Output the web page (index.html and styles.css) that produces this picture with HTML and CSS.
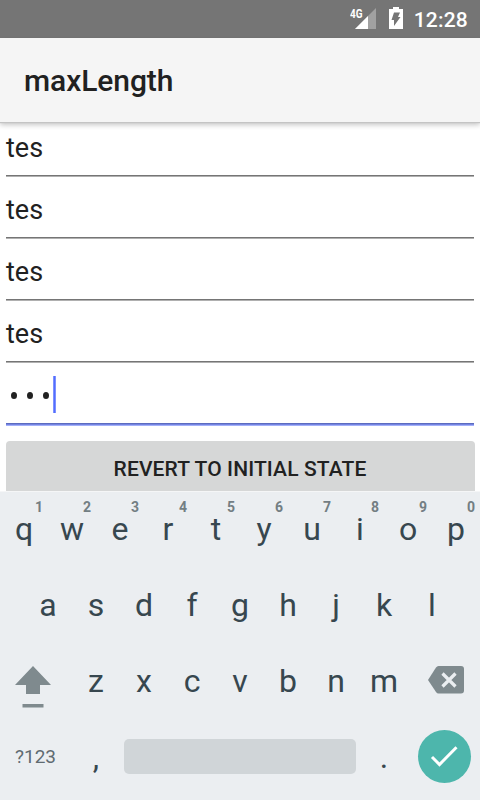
FILE: index.html
```
<!DOCTYPE html>
<html lang="en">
<head>
<meta charset="utf-8">
<title>maxLength</title>
<link rel="stylesheet" href="styles.css">
</head>
<body>
<div class="screen">
  <header class="status">
    <svg class="signal" width="28" height="24" viewBox="0 0 28 24">
      <path d="M26 3v21H5z" fill="#a1a1a1"/>
      <path d="M5 24L18 11v13z" fill="#fff"/>
      <text class="network" x="0" y="13" textLength="12.500" lengthAdjust="spacingAndGlyphs">4G</text>
    </svg>
    <svg class="battery" width="14" height="22" viewBox="0 0 14 22">
      <path d="M4 0h6v2h4v20H0V2h4z" fill="#fff"/>
      <path d="M5 5.500h6L9 10h2.500L5 19v-6H2.500z" fill="#757575"/>
    </svg>
    <span class="time">12:28</span>
  </header>
  <div class="appbar"><h1>maxLength</h1></div>
  <main class="content">
    <div class="field first">tes</div>
    <div class="field">tes</div>
    <div class="field">tes</div>
    <div class="field">tes</div>
    <div class="field password"><i class="dot"></i><i class="dot"></i><i class="dot"></i><i class="cursor"></i></div>
    <div class="button">REVERT TO INITIAL STATE</div>
  </main>
  <section class="keyboard">
    <div class="row top">
      <span class="key">q<sup>1</sup></span><span class="key">w<sup>2</sup></span><span class="key">e<sup>3</sup></span><span class="key">r<sup>4</sup></span><span class="key">t<sup>5</sup></span><span class="key">y<sup>6</sup></span><span class="key">u<sup>7</sup></span><span class="key">i<sup>8</sup></span><span class="key">o<sup>9</sup></span><span class="key">p<sup>0</sup></span>
    </div>
    <div class="row">
      <span class="key">a</span><span class="key">s</span><span class="key">d</span><span class="key">f</span><span class="key">g</span><span class="key">h</span><span class="key">j</span><span class="key">k</span><span class="key">l</span>
    </div>
    <div class="row">
      <span class="side"><svg class="shift" width="36" height="42" viewBox="0 0 36 42"><path d="M18 0l18 19H25v9H11v-9H0zM7.500 38h21v3.500h-21z" fill="#7f8a8e"/></svg></span>
      <span class="key">z</span><span class="key">x</span><span class="key">c</span><span class="key">v</span><span class="key">b</span><span class="key">n</span><span class="key">m</span>
      <span class="side"><svg class="delete" width="36" height="28" viewBox="0 0 36 28"><path d="M10.500 0H33a3 3 0 0 1 3 3v21.500a3 3 0 0 1-3 3H10.500Q9 27.500 8 26L0 14 8 1.500Q9 0 10.500 0z" fill="#7f8a8e"/><path d="M14.500 7.500l13 13M27.500 7.500l-13 13" stroke="#ebeef1" stroke-width="3.200" fill="none"/></svg></span>
    </div>
    <div class="row bottom">
      <span class="symbols">?123</span>
      <span class="key">,</span>
      <span class="space"></span>
      <span class="key">.</span>
      <span class="enter"><svg width="53" height="53" viewBox="0 0 53 53"><path d="M14 27l7.500 7.500L38.500 17.200" stroke="#fff" stroke-width="3" fill="none"/></svg></span>
    </div>
  </section>
</div>
</body>
</html>
```
FILE: styles.css
```
* { box-sizing: border-box; }
body { margin: 0; font-family: Roboto, sans-serif; color: #212121; background: #fff; }
.screen { width: 480px; height: 800px; overflow: hidden; display: flex; flex-direction: column; }

.status { height: 38px; flex: none; background: #757575; color: #fff; display: flex; align-items: flex-start; justify-content: flex-end; padding-right: 12px; }
.signal { margin: 5px 11px 0 0; }
.network { font-size: 12px; font-weight: 700; fill: #fff; }
.battery { margin: 7px 11px 0 0; }
.time { font-size: 21px; font-weight: 500; line-height: 38px; margin-top: 1px; letter-spacing: .2px; }

.appbar { height: 84px; flex: none; background: #f5f5f5; padding-left: 24px; box-shadow: 0 1px 1px #c4c4c4, 0 3px 5px rgba(0,0,0,.22); position: relative; z-index: 1; }
h1 { margin: 0; font-size: 30px; font-weight: 500; line-height: 85px; letter-spacing: -.08px; }

.content { height: 369px; flex: none; padding: 0 6px; overflow: hidden; }
.field { height: 62px; padding-top: 17px; font-size: 27px; line-height: 32px; background: linear-gradient(#757575 50%, #b0b0b0 50%) bottom / 100% 2px no-repeat; }
.first { height: 55px; padding-top: 10px; }
.password { height: 63px; padding: 13px 0 0 5px; display: flex; align-items: flex-start; background: linear-gradient(#5c6bc0 33.3%, #7383e0 33.3%, #7383e0 66.6%, #a3b0fa 66.6%) bottom / 100% 3px no-repeat; }
.dot { width: 6px; height: 7px; border-radius: 50%; background: #212121; margin: 16px 10px 0 0; }
.cursor { width: 3px; height: 37px; background: linear-gradient(90deg, #7d91ff 33%, #536dfe 33%, #536dfe 67%, #7d91ff 67%); margin-left: -6px; }
.button { height: 60px; margin: 15px -.5px 0; background: #d6d7d7; border-radius: 4px; font-size: 21px; font-weight: 500; line-height: 56px; text-align: center; letter-spacing: .12px; }

.keyboard { height: 309px; flex: none; background: #ebeef1; color: #37474f; border-top: 1px solid #f5f6f7; }
.row { height: 76px; display: flex; justify-content: center; font-size: 32px; line-height: 74px; }
.key { width: 48px; flex: none; text-align: center; position: relative; }
sup { position: absolute; right: 5px; top: 7px; font-size: 14px; line-height: 16px; font-weight: 700; color: #737e83; }
.side { width: 72px; flex: none; display: flex; }
.shift { margin: 22px 0 0 15px; }
.delete { margin: 22px 0 0 20px; }
.bottom { justify-content: flex-start; }
.symbols { width: 71px; margin-right: 1px; font-size: 19px; line-height: 74px; text-align: center; color: #5f6b71; }
.space { width: 232px; height: 35px; margin: 19px 4px 0; background: #d0d5d8; border-radius: 5px; }
.enter { width: 53px; height: 53px; margin: 10px 0 0 10px; border-radius: 50%; background: #4db6ac; }
.enter svg { display: block; }
```
